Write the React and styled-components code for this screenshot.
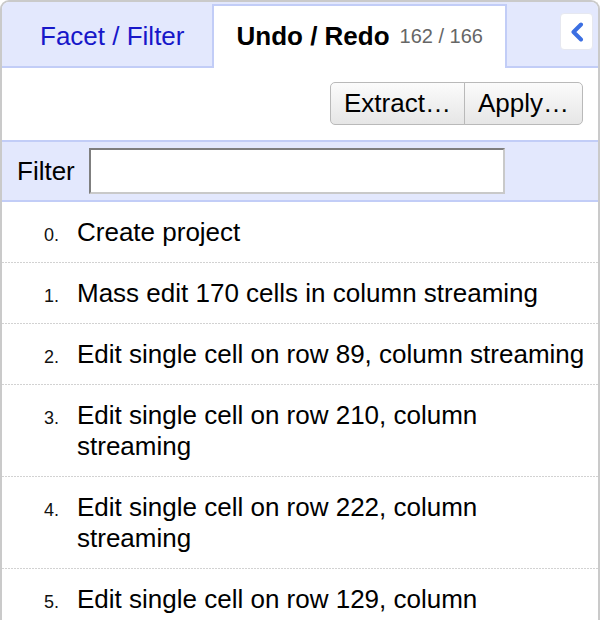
import React from "react";
import styled, { createGlobalStyle } from "styled-components";

const Global = createGlobalStyle`
  html, body { margin: 0; padding: 0; background: #fff; }
  body { font-family: "Liberation Sans", Arial, sans-serif; }
  * { box-sizing: border-box; }
`;

const Panel = styled.div`
  width: 600px;
  height: 620px;
  overflow: hidden;
  background: #fff;
  border: 2px solid #cacaca;
  border-bottom: none;
  border-radius: 9px 9px 0 0;
  display: flex;
  flex-direction: column;
`;

const TabBar = styled.div`
  display: flex;
  align-items: flex-end;
  gap: 4px;
  height: 66px;
  flex-shrink: 0;
  padding: 2px 0 0 14px;
  background: #e3e8fd;
  border-bottom: 2px solid #c2cdf7;
`;

const Tab = styled.div`
  display: flex;
  align-items: center;
  gap: 10px;
  height: 64px;
  margin-bottom: -2px;
  padding: 0 22px 2px;
  border: 2px solid ${(p) => (p.$active ? "#c2cdf7" : "transparent")};
  border-bottom: none;
  background: ${(p) => (p.$active ? "#fff" : "transparent")};
  color: ${(p) => (p.$active ? "#000" : "#1717c9")};
  font-size: 26px;
  font-weight: ${(p) => (p.$active ? "bold" : "normal")};
  white-space: nowrap;
  cursor: pointer;
`;

const Count = styled.span`
  font-size: 20px;
  font-weight: normal;
  color: #666;
`;

const CollapseButton = styled.div`
  align-self: flex-start;
  margin: 9px 5px 0 auto;
  width: 33px;
  height: 37px;
  display: flex;
  align-items: center;
  justify-content: center;
  background: #fff;
  border: 1px solid #e6e8f0;
  border-radius: 4px;
`;

const Toolbar = styled.div`
  display: flex;
  justify-content: flex-end;
  padding: 14px 15px 15px;
  flex-shrink: 0;
`;

const ButtonGroup = styled.div`
  display: flex;
`;

const Button = styled.button`
  height: 43px;
  padding: 0 13px;
  font-family: "Liberation Sans", Arial, sans-serif;
  font-size: 26px;
  color: #000;
  background: linear-gradient(#fbfbfb, #e6e6e6);
  border: 1px solid #b9b9b9;
  border-radius: ${(p) => (p.$first ? "5px 0 0 5px" : "0 5px 5px 0")};
  margin-left: ${(p) => (p.$first ? "0" : "-1px")};
  cursor: pointer;
`;

const FilterBar = styled.div`
  display: flex;
  align-items: center;
  gap: 14px;
  height: 62px;
  flex-shrink: 0;
  padding-left: 15px;
  background: #e3e8fd;
  border-top: 2px solid #c2cdf7;
  border-bottom: 2px solid #c2cdf7;
`;

const FilterLabel = styled.label`
  font-size: 26px;
  color: #000;
`;

const FilterInput = styled.input`
  width: 416px;
  height: 46px;
  padding: 0 6px;
  font-family: "Liberation Sans", Arial, sans-serif;
  font-size: 24px;
  background: #fff;
  border-style: solid;
  border-width: 2px;
  border-color: #7f7f7f #c9c9c9 #c9c9c9 #7f7f7f;
  outline: none;
`;

const List = styled.div`
  display: flex;
  flex-direction: column;
`;

const Entry = styled.div`
  display: grid;
  grid-template-columns: 33px 1fr;
  align-items: baseline;
  padding: 15px 8px 15px 42px;
  font-size: 26px;
  line-height: 31px;
  color: #000;
  background-image: linear-gradient(to right, #d2d2d2 2px, transparent 2px);
  background-size: 3px 1px;
  background-repeat: repeat-x;
  background-position: left bottom;
`;

const Index = styled.span`
  font-size: 18px;
  line-height: 18px;
  color: #111;
`;

const Description = styled.span``;

const entries = [
  "Create project",
  "Mass edit 170 cells in column streaming",
  "Edit single cell on row 89, column streaming",
  "Edit single cell on row 210, column streaming",
  "Edit single cell on row 222, column streaming",
  "Edit single cell on row 129, column streaming",
];

export default function App() {
  return (
    <>
      <Global />
      <Panel>
        <TabBar>
          <Tab>Facet / Filter</Tab>
          <Tab $active>
            Undo / Redo <Count>162 / 166</Count>
          </Tab>
          <CollapseButton>
            <svg width="14" height="20" viewBox="0 0 14 20">
              <polyline
                points="11,2.5 3.5,10 11,17.5"
                fill="none"
                stroke="#3c6fe2"
                strokeWidth="4"
                strokeLinecap="round"
                strokeLinejoin="round"
              />
            </svg>
          </CollapseButton>
        </TabBar>
        <Toolbar>
          <ButtonGroup>
            <Button $first>Extract…</Button>
            <Button>Apply…</Button>
          </ButtonGroup>
        </Toolbar>
        <FilterBar>
          <FilterLabel>Filter</FilterLabel>
          <FilterInput type="text" />
        </FilterBar>
        <List>
          {entries.map((text, i) => (
            <Entry key={i}>
              <Index>{i}.</Index>
              <Description>{text}</Description>
            </Entry>
          ))}
        </List>
      </Panel>
    </>
  );
}
